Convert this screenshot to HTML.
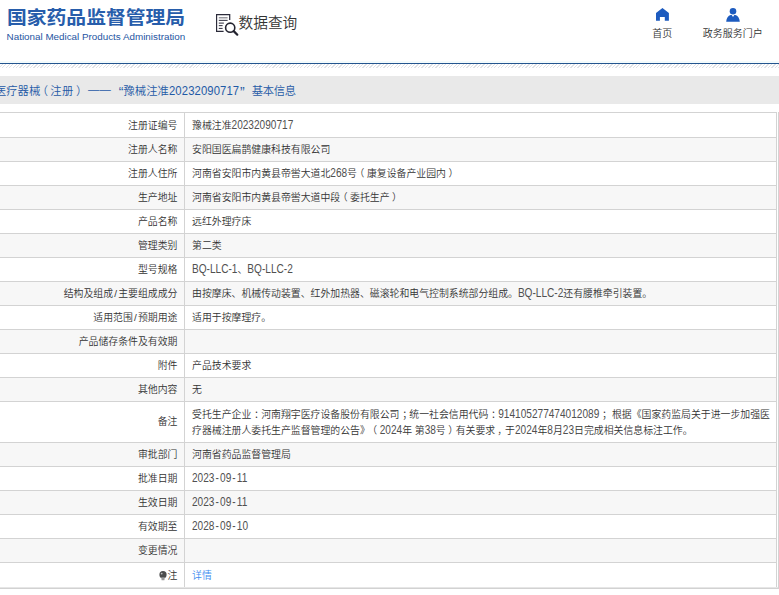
<!DOCTYPE html>
<html lang="zh-CN"><head><meta charset="utf-8"><title>数据查询</title>
<style>
html,body{margin:0;padding:0;background:#fff;}
body{text-spacing-trim:space-all;width:779px;height:595px;position:relative;overflow:hidden;font-family:"Liberation Sans","Noto Sans CJK SC",sans-serif;color:#333;}
.abs{position:absolute;white-space:nowrap;}
.logo{left:7px;top:4.6px;font-size:19.8px;line-height:28px;font-weight:bold;color:#275dab;transform:scaleY(0.92);transform-origin:0 0;}
.logosub{left:6.6px;top:31px;font-size:9.83px;line-height:12px;color:#2555a2;}
.q{left:238.5px;top:11.5px;font-size:14.7px;line-height:22px;color:#333;font-weight:350;}
.nav{font-size:10px;line-height:14px;color:#333;text-align:center;width:80px;font-weight:350;}
.blueline{left:0;top:63px;width:779px;height:1px;background:#23558f;}
.tint{left:0;top:61px;width:779px;height:2px;background:#f3fbfc;}
.hatch{left:0;top:64px;width:779px;height:4px;background:repeating-linear-gradient(135deg,#fff 0,#fff 1.55px,#dfe2e6 1.55px,#dfe2e6 2.45px);}
.bar{left:0;top:76px;width:779px;height:28px;background:#e9e9e9;}
.bt{font-weight:350;position:absolute;top:76.5px;font-size:11.3px;line-height:28px;color:#1f5aa6;white-space:nowrap;}
.row{font-weight:350;position:absolute;left:-20px;width:797px;border-top:1px solid #d3d3d3;border-right:1px solid #d3d3d3;box-sizing:border-box;}
.row.alt{background:#f7f7f7;}
.lab{position:absolute;left:0;top:0;bottom:0;width:205px;border-right:1px solid #d3d3d3;box-sizing:border-box;text-align:right;padding-right:6.5px;padding-top:3px;font-size:9.88px;line-height:16px;color:#333;white-space:nowrap;}
.val{position:absolute;left:205px;right:0;top:0;bottom:0;padding-top:3px;padding-left:7px;font-size:9.88px;line-height:16px;color:#333;white-space:nowrap;}
.lnk{color:#3f8df0;font-weight:350;}
.l{display:inline-block;transform:scaleY(1.22);transform-origin:50% 75%;color:#505050;font-size:10.1px;}
.hl{display:inline-block;transform:scaleY(1.15);transform-origin:50% 72%;}
.hy{padding:0 1.1px;}
.sl{padding:0 1.2px;}
.pl{position:relative;left:-0.25em;}
.pr{position:relative;left:0.25em;}
.pc{position:relative;left:0.28em;}
.pm{position:relative;left:0.2em;}
.tblbot{left:0;top:587px;width:779px;height:2px;background:linear-gradient(#e6e6e6 0,#e6e6e6 50%,#d2d2d2 50%,#d2d2d2 100%);}
.tblr{left:778px;top:112px;width:1px;height:477px;background:#d3d3d3;}
</style></head><body>
<div class="abs logo">国家药品监督管理局</div>
<div class="abs logosub">National Medical Products Administration</div>
<svg class="abs" style="left:216px;top:13px" width="24" height="24" viewBox="0 0 24 24">
 <path d="M13.7 7.1 V1.55 H0.55 V18.4 H7.6" fill="none" stroke="#2b2b3a" stroke-width="1.25"/>
 <path d="M2.8 4.8H11.6" fill="none" stroke="#77777f" stroke-width="1.1"/>
 <path d="M2.8 7.35H11.6 M2.8 10.1H7.9 M2.8 12.65H6.6 M2.8 15.4H6.6" fill="none" stroke="#2b2b3a" stroke-width="1"/>
 <circle cx="14.2" cy="14.7" r="4.6" fill="#fff" stroke="#23232f" stroke-width="1.6"/>
 <path d="M17.7 18.1 L21.3 21.7" stroke="#23232f" stroke-width="2.2" stroke-linecap="round"/>
</svg>
<div class="abs q">数据查询</div>
<svg class="abs" style="left:655px;top:7px" width="15" height="15" viewBox="0 0 15 15">
 <path d="M7.45 1.1 L13.9 6.1 V13.7 H9.8 V9.9 H4.9 V13.7 H1 V6.1 Z" fill="#1d5bbf"/>
</svg>
<div class="abs nav" style="left:622.3px;top:27px">首页</div>
<svg class="abs" style="left:726px;top:7px" width="15" height="15" viewBox="0 0 15 15">
 <circle cx="7" cy="4.2" r="3.3" fill="#1d5bbf"/>
 <path d="M0.2 14.8 C0.4 11 2.2 8.5 4.6 7.9 L5.7 7.9 L7 10.1 L8.3 7.9 L9.4 7.9 C11.8 8.5 13.6 11 13.8 14.8 Z" fill="#1d5bbf"/>
</svg>
<div class="abs nav" style="left:692.8px;top:27px">政务服务门户</div>
<div class="abs tint"></div>
<div class="abs blueline"></div>
<div class="abs hatch"></div>
<div class="abs bar"></div>
<div class="bt" style="left:-5px">医疗器械</div><div class="bt" style="left:36.7px">（</div><div class="bt" style="left:50.2px;letter-spacing:0.6px">注册</div><div class="bt" style="left:76.1px">）</div><div class="bt" style="left:88px;top:74.5px;letter-spacing:0.3px">——</div><div class="bt" style="left:118.8px;font-size:14px;top:77.5px">“</div><div class="bt" style="left:123.4px;letter-spacing:0.1px">豫械注准<span class="hl">20232090717</span></div><div class="bt" style="left:240px;font-size:14px;top:77.5px">”</div><div class="bt" style="left:251.7px;letter-spacing:-0.3px">基本信息</div>
<div class="row" style="top:112px;height:25px"><div class="lab" style="padding-top:5px">注册证编号</div><div class="val" style="padding-top:5px"><span>豫械注准<span class="l">20232090717</span></span></div></div>
<div class="row alt" style="top:137px;height:24px"><div class="lab" style="padding-top:4px">注册人名称</div><div class="val" style="padding-top:4px"><span>安阳国医扁鹊健康科技有限公司</span></div></div>
<div class="row" style="top:161px;height:24px"><div class="lab" style="padding-top:4px">注册人住所</div><div class="val" style="padding-top:4px"><span>河南省安阳市内黄县帝喾大道北<span class="l">268</span>号<span class="pl">（</span>康复设备产业园内<span class="pr">）</span></span></div></div>
<div class="row alt" style="top:185px;height:24px"><div class="lab" style="padding-top:4px">生产地址</div><div class="val" style="padding-top:4px"><span>河南省安阳市内黄县帝喾大道中段<span class="pl">（</span>委托生产<span class="pr">）</span></span></div></div>
<div class="row" style="top:209px;height:24px"><div class="lab" style="padding-top:4px">产品名称</div><div class="val" style="padding-top:4px"><span>远红外理疗床</span></div></div>
<div class="row alt" style="top:233px;height:24px"><div class="lab" style="padding-top:4px">管理类别</div><div class="val" style="padding-top:4px"><span>第二类</span></div></div>
<div class="row" style="top:257px;height:24px"><div class="lab" style="padding-top:4px">型号规格</div><div class="val" style="padding-top:4px"><span><span class="l">BQ-LLC-1</span>、<span class="l">BQ-LLC-2</span></span></div></div>
<div class="row alt" style="top:281px;height:24px"><div class="lab" style="padding-top:4px">结构及组成<span class="sl">/</span>主要组成成分</div><div class="val" style="padding-top:4px"><span>由按摩床、机械传动装置、红外加热器、磁滚轮和电气控制系统部分组成。<span class="l">BQ-LLC-2</span>还有腰椎牵引装置。</span></div></div>
<div class="row" style="top:305px;height:24px"><div class="lab" style="padding-top:4px">适用范围<span class="sl">/</span>预期用途</div><div class="val" style="padding-top:4px"><span>适用于按摩理疗。</span></div></div>
<div class="row alt" style="top:329px;height:24px"><div class="lab" style="padding-top:4px">产品储存条件及有效期</div><div class="val" style="padding-top:4px"><span></span></div></div>
<div class="row" style="top:353px;height:24px"><div class="lab" style="padding-top:4px">附件</div><div class="val" style="padding-top:4px"><span>产品技术要求</span></div></div>
<div class="row alt" style="top:377px;height:24px"><div class="lab" style="padding-top:4px">其他内容</div><div class="val" style="padding-top:4px"><span>无</span></div></div>
<div class="row" style="top:401px;height:41px"><div class="lab" style="padding-top:12px">备注</div><div class="val" style="padding-top:5px"><span>受托生产企业<span class="pc">：</span>河南翔宇医疗设备股份有限公司<span class="pc">；</span>统一社会信用代码<span class="pc">：</span><span class="l">914105277474012089</span><span class="pc">；</span> 根据《国家药监局关于进一步加强医<br>疗器械注册人委托生产监督管理的公告》<span class="pl">（</span><span class="l">2024</span>年 第<span class="l">38</span>号<span class="pr">）</span>有关要求<span class="pm">，</span>于<span class="l">2024</span>年<span class="l">8</span>月<span class="l">23</span>日完成相关信息标注工作。</span></div></div>
<div class="row alt" style="top:442px;height:24px"><div class="lab" style="padding-top:4px">审批部门</div><div class="val" style="padding-top:4px"><span>河南省药品监督管理局</span></div></div>
<div class="row" style="top:466px;height:24px"><div class="lab" style="padding-top:4px">批准日期</div><div class="val" style="padding-top:4px"><span><span class="l">2023<span class="hy">-</span>09<span class="hy">-</span>11</span></span></div></div>
<div class="row alt" style="top:490px;height:24px"><div class="lab" style="padding-top:4px">生效日期</div><div class="val" style="padding-top:4px"><span><span class="l">2023<span class="hy">-</span>09<span class="hy">-</span>11</span></span></div></div>
<div class="row" style="top:514px;height:24px"><div class="lab" style="padding-top:4px">有效期至</div><div class="val" style="padding-top:4px"><span><span class="l">2028<span class="hy">-</span>09<span class="hy">-</span>10</span></span></div></div>
<div class="row alt" style="top:538px;height:24px"><div class="lab" style="padding-top:4px">变更情况</div><div class="val" style="padding-top:4px"><span></span></div></div>
<div class="row" style="top:562px;height:25px"><div class="lab" style="padding-top:5px"><svg width="8" height="10" viewBox="0 0 8 10" style="margin-right:1px;position:relative;top:1.5px"><circle cx="4" cy="3.7" r="3.6" fill="#4d4d4d"/><path d="M2.2 6.2 H5.8 L5.4 9.3 H2.6 Z" fill="#9a9a9a"/><circle cx="2.7" cy="2.6" r="0.9" fill="#bdbdbd"/></svg>注</div><div class="val" style="padding-top:5px"><span><span class="lnk">详情</span></span></div></div>
<div class="abs tblbot"></div><div class="abs tblr"></div>
</body></html>
